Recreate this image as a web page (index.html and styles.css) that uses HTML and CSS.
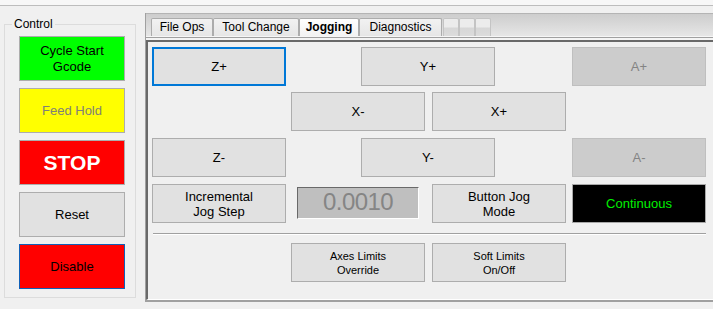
FILE: index.html
```html
<!DOCTYPE html>
<html>
<head>
<meta charset="utf-8">
<link rel="stylesheet" href="styles.css">
</head>
<body>
<div class="topbar"></div>
<div class="main">
  <fieldset class="group">
    <legend>Control</legend>
    <div class="ctl-buttons">
      <div class="btn ctl green">Cycle Start<br>Gcode</div>
      <div class="btn ctl yellow">Feed Hold</div>
      <div class="btn ctl stop">STOP</div>
      <div class="btn ctl">Reset</div>
      <div class="btn ctl disable">Disable</div>
    </div>
  </fieldset>
  <div class="tabctl">
    <div class="tabstrip">
      <div class="tab w-file">File Ops</div>
      <div class="tab w-tool">Tool Change</div>
      <div class="tab w-jog selected">Jogging</div>
      <div class="tab w-diag">Diagnostics</div>
      <div class="tab small first"></div>
      <div class="tab small"></div>
      <div class="tab small"></div>
    </div>
    <div class="rule"></div>
    <div class="panel">
      <div class="jog-grid">
        <div class="btn jog focus c1 r1">Z+</div>
        <div class="btn jog c-y r1">Y+</div>
        <div class="btn jog dis c9 r1">A+</div>
        <div class="btn jog c-xm r3">X-</div>
        <div class="btn jog c-xp r3">X+</div>
        <div class="btn jog c1 r5">Z-</div>
        <div class="btn jog c-y r5">Y-</div>
        <div class="btn jog dis c9 r5">A-</div>
        <div class="btn jog c1 r7">Incremental<br>Jog Step</div>
        <div class="stepbox c-xm r7">0.0010</div>
        <div class="btn jog c-xp r7">Button Jog<br>Mode</div>
        <div class="btn jog black c9 r7">Continuous</div>
      </div>
      <div class="sep"></div>
      <div class="jog-grid bottom-row">
        <div class="btn jog sm c-xm">Axes Limits<br>Override</div>
        <div class="btn jog sm c-xp">Soft Limits<br>On/Off</div>
      </div>
    </div>
  </div>
</div>
</body>
</html>
```

FILE: styles.css
```css
* { box-sizing: border-box; }
html, body { margin: 0; padding: 0; }
body {
  width: 713px;
  height: 309px;
  overflow: hidden;
  background: #f0f0f0;
  font-family: "Liberation Sans", Arial, sans-serif;
  color: #000;
}
.topbar {
  height: 6px;
  background: #f7f7f7;
  border-bottom: 1px solid #bdbdbd;
}
.main {
  display: flex;
  align-items: flex-start;
  padding-left: 4px;
}
.group {
  margin: 11px 0 0 0;
  width: 132px;
  padding: 5px 10px 8px 14px;
  border: 1px solid #dcdcdc;
  min-width: 0;
}
.group legend {
  font-size: 12px;
  line-height: 14px;
  padding: 0 2px;
  margin-left: -7px;
}
.ctl-buttons {
  display: flex;
  flex-direction: column;
  gap: 7px;
}
.btn {
  display: flex;
  align-items: center;
  justify-content: center;
  text-align: center;
  background: #e1e1e1;
  border: 1px solid #adadad;
  font-size: 13px;
  color: #000;
}
.ctl {
  width: 106px;
  height: 45px;
  line-height: 16px;
}
.green { background: #00ff00; }
.yellow { background: #ffff00; color: #808078; }
.stop {
  background: #ff0000;
  color: #fff;
  font-weight: bold;
  font-size: 21px;
}
.disable {
  background: #ff0000;
  border-color: #1060b8;
}
.tabctl {
  flex: 1;
  margin: 7px 0 0 9px;
  border-left: 1px solid #a0a0a0;
  border-bottom: 2px solid #a0a0a0;
}
.tabstrip {
  display: flex;
  align-items: flex-end;
  height: 24px;
  padding-left: 5px;
  border-top: 1px solid #b4b4b4;
  border-bottom: 1px solid #f6f6f6;
  background: linear-gradient(#cdcdcd, #e6e6e6);
}
.tab {
  height: 18px;
  border: 1px solid #acacac;
  border-bottom: none;
  border-radius: 2px 2px 0 0;
  background: linear-gradient(#f2f2f2, #e6e6e6);
  font-size: 12px;
  line-height: 17px;
  text-align: center;
  margin-right: 0;
}
.tab.selected {
  background: linear-gradient(#ffffff, #f2f2f2);
  font-weight: bold;
}
.w-file { width: 62px; }
.w-tool { width: 86px; }
.w-jog { width: 60px; }
.w-diag { width: 83px; }
.tab.small {
  width: 16px;
  background: linear-gradient(#ececec 0, #ececec 45%, #d7d7d7 55%, #dcdcdc 100%);
  border-color: #c4c4c4;
}
.tab.small.first { margin-left: 1px; }
.rule {
  height: 3px;
  border-top: 1px solid #a0a0a0;
  background: #f4f4f4;
}
.panel {
  border-top: 2px solid #696969;
  border-left: 2px solid #696969;
  border-bottom: 1px solid #ffffff;
  padding: 5px 0 17px 4px;
}
.jog-grid {
  display: grid;
  grid-template-columns: 134px 5px 70px 64px 7px 63px 71px 6px 134px;
  grid-template-rows: 39px 6px 39px 7px 39px 7px 39px;
}
.jog-grid.bottom-row {
  grid-template-rows: 39px;
  margin-top: 8px;
}
.jog { line-height: 15px; }
.jog.sm { font-size: 11px; line-height: 14px; }
.focus { border: 2px solid #0078d7; }
.dis {
  background: #cccccc;
  border-color: #bfbfbf;
  color: #838383;
}
.black {
  background: #000;
  color: #00f000;
  border-color: #a8a8a8;
}
.c1 { grid-column: 1 / 2; }
.c-y { grid-column: 4 / 7; }
.c9 { grid-column: 9 / 10; }
.c-xm { grid-column: 3 / 5; }
.c-xp { grid-column: 6 / 8; }
.r1 { grid-row: 1; }
.r3 { grid-row: 3; }
.r5 { grid-row: 5; }
.r7 { grid-row: 7; }
.stepbox {
  margin: 3px 6px 4px 6px;
  background: #bfbfbf;
  border-top: 1px solid #696969;
  border-left: 1px solid #696969;
  border-right: 1px solid #ffffff;
  border-bottom: 1px solid #ffffff;
  color: #858585;
  font-size: 24px;
  letter-spacing: -0.6px;
  display: flex;
  align-items: center;
  justify-content: center;
  line-height: 26px;
  padding-bottom: 2px;
}
.sep {
  margin: 10px 0 0 1px;
  width: 553px;
  height: 2px;
  border-top: 1px solid #a0a0a0;
  background: #ffffff;
}
```
